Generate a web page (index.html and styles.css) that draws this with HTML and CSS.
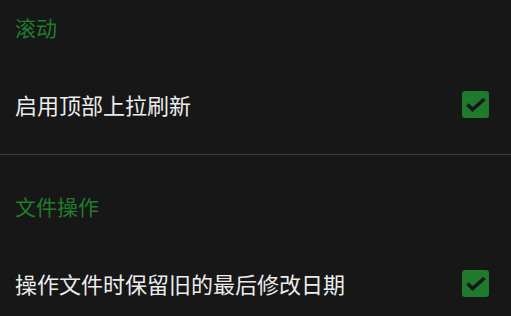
FILE: index.html
```html
<!DOCTYPE html>
<html lang="zh-CN">
<head>
	<meta charset="UTF-8">
	<title>设置</title>
	<link rel="stylesheet" href="styles.css">
</head>
<body>
	<div class="prefs">
		<div class="section">
			<div class="title">滚动</div>
			<div class="row">
				<span class="label">启用顶部上拉刷新</span>
				<span class="check">
					<svg width="27" height="27" viewBox="0 0 27 27"><rect width="27" height="27" rx="3" fill="#1e7a2c"/><path d="M5.5 13.5 L10.5 18.5 L22.5 8" fill="none" stroke="#171717" stroke-width="3.6"/></svg>
				</span>
			</div>
		</div>
		<div class="section">
			<div class="title">文件操作</div>
			<div class="row">
				<span class="label">操作文件时保留旧的最后修改日期</span>
				<span class="check">
					<svg width="27" height="27" viewBox="0 0 27 27"><rect width="27" height="27" rx="3" fill="#1e7a2c"/><path d="M5.5 13.5 L10.5 18.5 L22.5 8" fill="none" stroke="#171717" stroke-width="3.6"/></svg>
				</span>
			</div>
		</div>
	</div>
</body>
</html>
```
FILE: styles.css
```css
body {
	margin: 0;
	background: #171717;
	font-family: "Noto Sans CJK SC", "Noto Sans", sans-serif;
	overflow: hidden;
}
.section {/*每一组设置*/
	padding-bottom: 13px;
	border-bottom: 1px solid #3c3c3c;
}
.section + .section .title {
	padding-top: 39px;
}
.title {/*分组标题*/
	color: #1f7d2b;
	font-size: 21px;
	line-height: 24px;
	padding: 15px 15px 29px 15px;
}
.row {/*每一行*/
	display: flex;
	align-items: center;
	height: 73px;
	padding: 0 22px 0 15px;
}
.label {
	flex: 1;
	color: #ececec;
	font-size: 22px;
	line-height: 26px;
	margin-top: -2px;
}
.check svg {
	display: block;
}
```
